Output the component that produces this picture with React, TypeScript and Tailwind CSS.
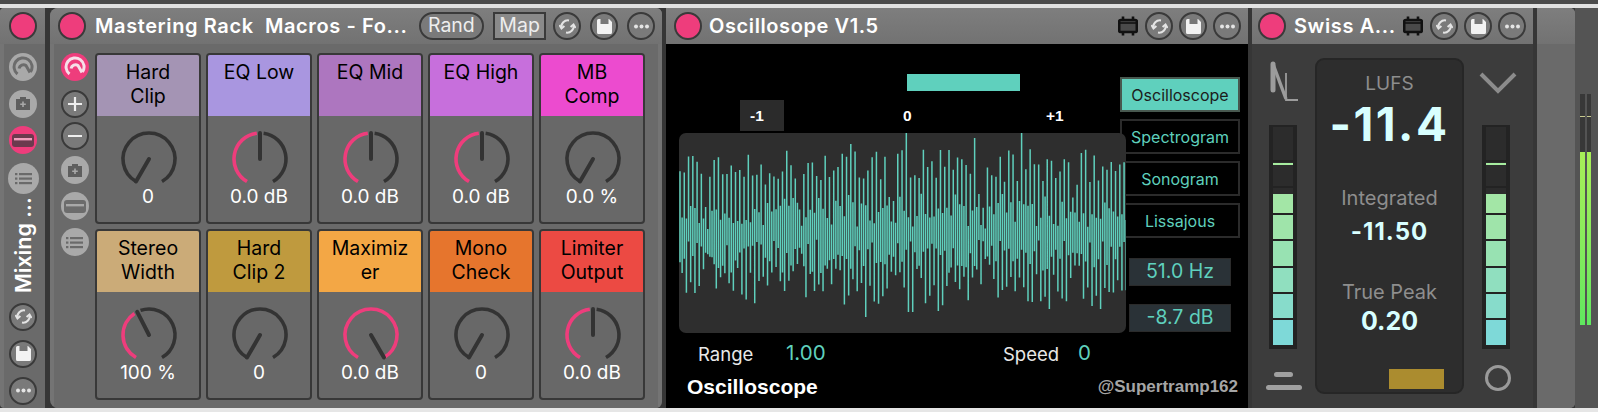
import React from 'react';

const PINK = '#ee3d7c';
const DARK = '#333333';
const TEAL = '#5fd0bd';

function polar(r: number, deg: number) {
  const a = (deg * Math.PI) / 180;
  return { x: 30 + r * Math.sin(a), y: 30 - r * Math.cos(a) };
}

function arc(r: number, from: number, to: number) {
  const s = polar(r, from);
  const e = polar(r, to);
  const large = to - from > 180 ? 1 : 0;
  return `M${s.x} ${s.y} A${r} ${r} 0 ${large} 1 ${e.x} ${e.y}`;
}

const Knob = ({ angle }: { angle: number }) => {
  const tip = polar(26, angle);
  const isMin = angle <= -149;
  const isMax = angle >= 145;
  return (
    <svg width="60" height="60" viewBox="0 0 60 60" fill="none" className="ml-[2px]">
      {isMin && <path d={arc(26, -150, 150)} stroke={DARK} strokeWidth="3.6" />}
      {isMax && <path d={arc(26, -150, 150)} stroke={PINK} strokeWidth="3.6" />}
      {!isMin && !isMax && (
        <>
          <path d={arc(26, -150, angle - 7)} stroke={PINK} strokeWidth="3.6" />
          <path d={arc(26, angle + 8, 150)} stroke={DARK} strokeWidth="3.6" />
        </>
      )}
      <line x1="30" y1="30" x2={tip.x} y2={tip.y} stroke={DARK} strokeWidth="4" strokeLinecap="round" />
    </svg>
  );
};

const macros = [
  { lines: ['Hard', 'Clip'], color: 'bg-[#a494b4]', value: '0', angle: -150 },
  { lines: ['EQ Low'], color: 'bg-[#a996e0]', value: '0.0 dB', angle: 0 },
  { lines: ['EQ Mid'], color: 'bg-[#ad76bf]', value: '0.0 dB', angle: 0 },
  { lines: ['EQ High'], color: 'bg-[#c76fdc]', value: '0.0 dB', angle: 0 },
  { lines: ['MB', 'Comp'], color: 'bg-[#ec4bcf]', value: '0.0 %', angle: -150 },
  { lines: ['Stereo', 'Width'], color: 'bg-[#cbab78]', value: '100 %', angle: -27 },
  { lines: ['Hard', 'Clip 2'], color: 'bg-[#bf9a3e]', value: '0', angle: -150 },
  { lines: ['Maximiz', 'er'], color: 'bg-[#f3a745]', value: '0.0 dB', angle: 150 },
  { lines: ['Mono', 'Check'], color: 'bg-[#e6752d]', value: '0', angle: -150 },
  { lines: ['Limiter', 'Output'], color: 'bg-[#ec4a43]', value: '0.0 dB', angle: 0 },
];

const MacroCard = ({ lines, color, value, angle }: (typeof macros)[number]) => (
  <div className="flex flex-col border-2 border-[#383838] rounded-[4px] bg-[#686868] overflow-hidden">
    <div className={`h-[61px] pt-[5px] text-center text-black text-[19.5px] leading-[24px] whitespace-nowrap ${color}`}>
      {lines.map((l) => (
        <div key={l}>{l}</div>
      ))}
    </div>
    <div className="flex flex-col items-center pt-[13px]">
      <Knob angle={angle} />
      <div className="text-white text-[19px] leading-[22px] -mt-[3px]">{value}</div>
    </div>
  </div>
);

const RedDot = () => <div className="w-[28px] h-[28px] rounded-full bg-[#ee3d7c] border-2 border-[#3a3a3a] shrink-0" />;

const SyncIcon = () => (
  <svg width="17" height="17" viewBox="0 0 17 17" fill="none" stroke="#e4e4e4" strokeWidth="2">
    <path d="M2.5 10 A6.5 6.5 0 0 1 10 2.4" />
    <path d="M14.5 7 A6.5 6.5 0 0 1 7 14.6" />
    <path d="M0.4 7 L2.5 10.5 L5.4 8" />
    <path d="M16.6 10 L14.5 6.5 L11.6 9" />
  </svg>
);

const SaveIcon = () => (
  <svg width="17" height="17" viewBox="0 0 17 17">
    <path d="M1 2.5 A1.5 1.5 0 0 1 2.5 1 H13 L16 4 V14.5 A1.5 1.5 0 0 1 14.5 16 H2.5 A1.5 1.5 0 0 1 1 14.5 Z" fill="#f2f2f2" />
    <rect x="4.5" y="1" width="8" height="5" fill="#777777" />
  </svg>
);

const DotsIcon = () => (
  <svg width="17" height="5" viewBox="0 0 17 5" fill="#e4e4e4">
    <circle cx="3" cy="2.5" r="2" />
    <circle cx="8.5" cy="2.5" r="2" />
    <circle cx="14" cy="2.5" r="2" />
  </svg>
);

const PluginIcon = () => (
  <svg width="20" height="20" viewBox="0 0 20 20" fill="none" className="shrink-0">
    <rect x="1.2" y="4" width="17.6" height="12" rx="1.5" fill="#4a4a4a" stroke="#111111" strokeWidth="2.6" />
    <path d="M5 0.5 V4 M15 0.5 V4 M5 16 V19.5 M15 16 V19.5" stroke="#111111" strokeWidth="2.6" />
    <path d="M1.2 7 H18.8" stroke="#111111" strokeWidth="1.6" />
  </svg>
);

const RoundButton = ({ children }: { children: React.ReactNode }) => (
  <div className="w-[28px] h-[28px] rounded-full border-2 border-[#3a3a3a] bg-[#7a7a7a] flex items-center justify-center shrink-0">
    {children}
  </div>
);

const HeaderButtons = () => (
  <>
    <RoundButton><SyncIcon /></RoundButton>
    <RoundButton><SaveIcon /></RoundButton>
    <RoundButton><DotsIcon /></RoundButton>
  </>
);

const HotSwapGlyph = ({ color }: { color: string }) => (
  <svg width="22" height="22" viewBox="0 0 22 22" fill="none" stroke={color} strokeWidth="3">
    <path d="M5.5 18 A9 9 0 1 1 18.5 16" />
    <path d="M7 12.5 A4.6 4.6 0 0 1 14 9.5 L18 16.5" />
  </svg>
);

const CameraGlyph = () => (
  <svg width="16" height="15" viewBox="0 0 16 15">
    <path d="M1 3 H5 V1 H11 V3 H15 V14 H1 Z" fill="#5e5e5e" />
    <path d="M8 5.5 V11 M5.2 8.2 H10.8" stroke="#a8a8a8" strokeWidth="1.6" />
  </svg>
);

const RectGlyph = ({ fill, band }: { fill: string; band: string }) => (
  <svg width="22" height="13" viewBox="0 0 22 13">
    <rect x="0" y="0" width="22" height="13" rx="3" fill={fill} />
    <rect x="2" y="4" width="18" height="2.4" fill={band} />
  </svg>
);

const ListGlyph = () => (
  <svg width="17" height="13" viewBox="0 0 17 13" fill="#6a6a6a">
    <rect x="0" y="1" width="2.4" height="2.2" />
    <rect x="4" y="1" width="13" height="2.2" />
    <rect x="0" y="5.5" width="2.4" height="2.2" />
    <rect x="4" y="5.5" width="13" height="2.2" />
    <rect x="0" y="10" width="2.4" height="2.2" />
    <rect x="4" y="10" width="13" height="2.2" />
  </svg>
);

const FlatCircle = ({ children, pink, big }: { children: React.ReactNode; pink?: boolean; big?: boolean }) => (
  <div
    className={`rounded-full flex items-center justify-center shrink-0 ${big ? 'w-[31px] h-[31px]' : 'w-[28px] h-[28px]'} ${
      pink ? 'bg-[#ee3d7c]' : 'bg-[#a9a9a9]'
    }`}
  >
    {children}
  </div>
);

const HeaderBar = ({ children, className = '' }: { children: React.ReactNode; className?: string }) => (
  <div className={`h-[36px] shrink-0 flex items-center bg-gradient-to-b from-[#7e7e7e] to-[#727272] ${className}`}>{children}</div>
);

const Title = ({ children, className = '' }: { children: React.ReactNode; className?: string }) => (
  <div className={`text-white text-[20px] font-semibold tracking-[0.6px] whitespace-pre ${className}`}>{children}</div>
);

const Divider = ({ w = 'w-[4px]' }: { w?: string }) => <div className={`${w} shrink-0 bg-[#363636]`} />;

const MixingStrip = () => (
  <div className="w-[45px] shrink-0 flex flex-col bg-[#747474] rounded-tl-[4px] rounded-bl-[4px]">
    <HeaderBar className="justify-center pl-[1px] rounded-tl-[4px]">
      <RedDot />
    </HeaderBar>
    <div className="flex-1 ml-[4px] bg-[#6a6a6a] flex flex-col items-center pt-[9px] pr-[3px]">
      <div className="flex flex-col items-center gap-[8.5px]">
        <FlatCircle><HotSwapGlyph color="#6c6c6c" /></FlatCircle>
        <FlatCircle><CameraGlyph /></FlatCircle>
        <FlatCircle pink><RectGlyph fill="#6b3a4e" band="#f0a0bd" /></FlatCircle>
        <FlatCircle big><ListGlyph /></FlatCircle>
      </div>
      <div className="h-[99px] mt-[2px] flex items-center justify-center">
        <div className="-rotate-90 whitespace-nowrap text-white text-[21.5px] font-semibold">Mixing ...</div>
      </div>
      <div className="flex flex-col items-center gap-[9px] mt-[8px]">
        <HeaderButtons />
      </div>
    </div>
  </div>
);

const MasteringRack = () => (
  <div className="w-[612px] shrink-0 flex flex-col bg-[#747474] rounded-tl-[8px] rounded-bl-[8px] rounded-tr-[6px] rounded-br-[6px] overflow-hidden">
    <HeaderBar className="pl-[8px] pr-[7px]">
      <RedDot />
      <Title className="ml-[9px] w-[325px]">Mastering Rack  Macros - Fo...</Title>
      <div className="w-[66px] h-[28px] rounded-full border-2 border-[#3a3a3a] bg-[#7a7a7a] text-[#eeeeee] text-[19.5px] flex items-center justify-center">Rand</div>
      <div className="ml-[9px] w-[53px] h-[28px] border-2 border-[#3a3a3a] bg-[#8a8a8a] text-[#eeeeee] text-[19.5px] flex items-center justify-center">Map</div>
      <div className="ml-[7px] flex gap-[9px]">
        <HeaderButtons />
      </div>
    </HeaderBar>
    <div className="flex-1 mx-[4px] bg-[#6a6a6a] flex pt-[9px]">
      <div className="w-[41px] shrink-0 flex flex-col items-center">
        <FlatCircle pink><HotSwapGlyph color="#f6dfe8" /></FlatCircle>
        <div className="mt-[9px]">
          <RoundButton>
            <svg width="16" height="16" viewBox="0 0 16 16" stroke="#eeeeee" strokeWidth="2.2"><path d="M8 1 V15 M1 8 H15" /></svg>
          </RoundButton>
        </div>
        <div className="mt-[4px]">
          <RoundButton>
            <svg width="16" height="4" viewBox="0 0 16 4" stroke="#eeeeee" strokeWidth="2.2"><path d="M1 2 H15" /></svg>
          </RoundButton>
        </div>
        <div className="mt-[6px] flex flex-col items-center gap-[8px]">
          <FlatCircle><CameraGlyph /></FlatCircle>
          <FlatCircle><RectGlyph fill="#6c6c6c" band="#a9a9a9" /></FlatCircle>
          <FlatCircle><ListGlyph /></FlatCircle>
        </div>
      </div>
      <div className="grid grid-cols-[repeat(5,106px)] grid-rows-[repeat(2,171px)] gap-[5px]">
        {macros.map((m) => (
          <MacroCard key={m.lines.join(' ')} {...m} />
        ))}
      </div>
    </div>
  </div>
);

// pseudo random spikes, pitch taken from the reference (about 4.27px)
const rnd = (i: number) => {
  const v = Math.sin(i * 12.9898 + 4.1) * 43758.5453;
  return v - Math.floor(v);
};

const peaksUp: Record<number, number> = { 53: 100, 69: 95, 80: 100, 106: 92, 40: 89, 30: 70 };
const peaksDown: Record<number, number> = { 43: 84, 54: 79, 60: 78, 86: 76, 98: 76, 53: 79 };

function wavePath() {
  const parts: string[] = [];
  for (let i = 0; i < 105; i++) {
    const x = 1 + i * 4.27;
    const env = 0.35 + 0.65 * Math.min(1, Math.abs(Math.cos(((x - 166) * Math.PI) / 92)) * 5);
    const up = peaksUp[i] ?? env * (48 + rnd(i) * 36);
    const down = peaksDown[i] ?? env * (34 + rnd(i + 200) * 40);
    // each stroke runs past the centre by a varying amount, so the middle band has no hard edge
    const under = env * (6 + rnd(i + 400) * 34);
    const over = env * (6 + rnd(i + 600) * 34);
    parts.push(`M${x} ${100 - up} V${100 + under}`, `M${x + 2.13} ${100 - over} V${100 + down}`);
  }
  return parts.join(' ');
}

const Waveform = () => (
  <svg width="447" height="200" viewBox="0 0 447 200" fill="none">
    <path d={wavePath()} stroke={TEAL} strokeWidth="1.5" />
  </svg>
);

const modes = ['Oscilloscope', 'Spectrogram', 'Sonogram', 'Lissajous'];

const Oscilloscope = () => (
  <div className="w-[582px] shrink-0 flex flex-col bg-black">
    <HeaderBar className="pl-[8px] pr-[7px]">
      <RedDot />
      <Title className="ml-[7px] flex-1">Oscillosope V1.5</Title>
      <div className="mr-[7px]"><PluginIcon /></div>
      <div className="flex gap-[6px]">
        <HeaderButtons />
      </div>
    </HeaderBar>
    <div className="flex pl-[13px]">
      <div className="w-[447px] shrink-0 relative z-10">
        <div className="mt-[30px] ml-[228px] w-[113px] h-[17px] bg-[#5fd0bd]" />
        <div className="mt-[9px] h-[31px] flex items-center text-white text-[15.5px] font-bold font-['Liberation_Sans',sans-serif]">
          <div className="ml-[61px] w-[44px] h-[31px] bg-[#2b2b2b] flex items-center pl-[10px]">-1</div>
          <div className="ml-[119px] w-[9px]">0</div>
          <div className="ml-[134px]">+1</div>
        </div>
        <div className="mt-[2px] h-[200px] bg-[#2e2e2e] rounded-[7px] overflow-hidden">
          <Waveform />
        </div>
      </div>
      <div className="w-[120px] -ml-[6px] shrink-0 pt-[33px] flex flex-col gap-[7px]">
        {modes.map((m, i) => (
          <div
            key={m}
            className={`h-[35px] flex items-center justify-center text-[16px] border-2 ${
              i === 0 ? 'bg-[#5fd0bd] border-[#48584f] text-[#1c1c1c]' : 'border-[#2b2b2b] text-[#5fd0bd]'
            }`}
          >
            {m}
          </div>
        ))}
        <div className="ml-[9px] mt-[13px] w-[102px] h-[28px] bg-[#2a3237] border border-[#2b2b2b] text-[#5fd0bd] text-[19.5px] flex items-center justify-center">51.0 Hz</div>
        <div className="ml-[9px] mt-[11px] w-[102px] h-[28px] bg-[#2a3237] border border-[#2b2b2b] text-[#5fd0bd] text-[19.5px] flex items-center justify-center">-8.7 dB</div>
      </div>
    </div>
    <div className="flex items-start mt-[5px] h-[28px] pl-[32px]">
      <div className="w-[88px] mt-[3px] text-[#e8e8e8] text-[18.5px]">Range</div>
      <div className="w-[217px] text-[#5fd0bd] text-[20.5px]">1.00</div>
      <div className="w-[75px] mt-[3px] text-[#e8e8e8] text-[18.5px]">Speed</div>
      <div className="text-[#5fd0bd] text-[20.5px]">0</div>
    </div>
    <div className="flex items-center justify-between pl-[21px] pr-[10px] mt-[9px] font-['Liberation_Sans',sans-serif] font-bold">
      <div className="text-white text-[21px] leading-[24px]">Oscilloscope</div>
      <div className="text-[#a5a5a5] text-[17px] leading-[18px]">@Supertramp162</div>
    </div>
  </div>
);

const Meter = () => {
  const cells = [0, 1, 2, 3, 4, 5, 6];
  const colors = ['', 'bg-[#a3e6a6]', 'bg-[#9fe4aa]', 'bg-[#98e2b2]', 'bg-[#90dfbf]', 'bg-[#87dccb]', 'bg-[#7ed9d8]'];
  return (
    <div className="w-[28px] h-[224px] bg-[#232323] px-[4px] pt-[2px] pb-[2px] flex flex-col gap-[2px]">
      <div className="h-[33px] bg-[#2c2c2c]" />
      {cells.map((i) => (
        <div key={i} className="h-[24.4px] bg-[#2c2c2c]">
          {i === 0 && <div className="h-[2px] mt-[1px] bg-[#a6ec9f]" />}
          {i === 1 && <div className={`h-[19px] mt-[5.4px] ${colors[1]}`} />}
          {i > 1 && <div className={`h-full ${colors[i]}`} />}
        </div>
      ))}
    </div>
  );
};

const SwissMeter = () => (
  <div className="w-[281px] shrink-0 flex flex-col bg-[#3c3c3c]">
    <HeaderBar className="pl-[6px] pr-[7px]">
      <RedDot />
      <Title className="ml-[8px] flex-1">Swiss A...</Title>
      <div className="mr-[7px]"><PluginIcon /></div>
      <div className="flex gap-[6px]">
        <HeaderButtons />
      </div>
    </HeaderBar>
    <div className="flex-1 flex">
      <div className="w-[63px] shrink-0 flex flex-col items-center">
        <svg width="32" height="42" viewBox="0 0 32 42" fill="none" className="mt-[17px] ml-[1px]">
          <path d="M5 3 V29" stroke="#9c9c9c" strokeWidth="5" strokeLinecap="round" />
          <path d="M5 3 L18 38" stroke="#9c9c9c" strokeWidth="3.4" />
          <path d="M18 12 V39 H30" stroke="#9c9c9c" strokeWidth="1.8" />
        </svg>
        <div className="mt-[22px] -ml-[1px]"><Meter /></div>
        <div className="mt-[23px] flex flex-col items-center gap-[8px]">
          <div className="w-[19px] h-[5px] rounded-full bg-[#a0a0a0]" />
          <div className="w-[36px] h-[5px] rounded-full bg-[#a0a0a0]" />
        </div>
      </div>
      <div className="w-[149px] shrink-0 h-[336px] mt-[14px] rounded-[9px] bg-[#2d2d2d] border-2 border-[#262626] flex flex-col items-center">
        <div className="mt-[12px] text-[#8e8e8e] text-[19px] leading-[24px]">LUFS</div>
        <div className="mt-[3px] text-[#d8ffff] text-[46px] leading-[50px] font-bold tracking-[2.5px]">-11.4</div>
        <div className="mt-[36px] text-[#8e8e8e] text-[20px] leading-[26px]">Integrated</div>
        <div className="mt-[7px] text-[#d8ffff] text-[24px] leading-[28px] font-bold tracking-[1px]">-11.50</div>
        <div className="mt-[33px] text-[#8e8e8e] text-[20px] leading-[26px]">True Peak</div>
        <div className="mt-[1px] text-[#d8ffff] text-[25px] leading-[30px] font-bold">0.20</div>
        <div className="mt-[33px] ml-[54px] w-[55px] h-[20px] bg-[#ab8c2f]" />
      </div>
      <div className="flex-1 flex flex-col items-center">
        <svg width="38" height="22" viewBox="0 0 38 22" fill="none" className="mt-[28px] -ml-[1px]">
          <path d="M2 2 L19 19 L36 2" stroke="#8c8c8c" strokeWidth="4" />
        </svg>
        <div className="mt-[31px] -ml-[6px]"><Meter /></div>
        <div className="mt-[16px] -ml-[2px] w-[26px] h-[26px] rounded-full border-[3px] border-[#9a9a9a]" />
      </div>
    </div>
  </div>
);

const TrackMeter = () => (
  <div className="flex-1 bg-[#545454] pt-[86px] pl-[5px]">
    <div className="flex gap-[2px] h-[231px] w-[11px]">
      {[0, 1].map((c) => (
        <div key={c} className="w-[4.5px] h-full flex flex-col bg-[#383838]">
          <div className="h-[23px] border-b border-[#c7c98f]" />
          <div className="flex-1" />
          <div className="h-[173px] bg-gradient-to-b from-[#a8ee58] to-[#5fe85f]" />
        </div>
      ))}
    </div>
  </div>
);

export default function App() {
  return (
    <div className="w-[1598px] h-[412px] flex flex-col overflow-hidden bg-[#e6e6e6] font-['Inter',sans-serif]">
      <div className="h-[4px] shrink-0 bg-[#4c4c4c]" />
      <div className="h-[4px] shrink-0 bg-[#e2e2e2]" />
      <div className="h-[400px] flex bg-[#363636]">
        <MixingStrip />
        <Divider w="w-[5px]" />
        <MasteringRack />
        <Divider />
        <Oscilloscope />
        <Divider />
        <SwissMeter />
        <Divider />
        <div className="w-[38px] shrink-0 flex flex-col bg-[#6d6d6d] rounded-tr-[5px] rounded-br-[5px] overflow-hidden">
          <HeaderBar><div /></HeaderBar>
          <div className="flex-1 bg-[#6a6a6a]" />
        </div>
        <TrackMeter />
      </div>
      <div className="h-[4px] shrink-0 bg-[#e6e6e6]" />
    </div>
  );
}
